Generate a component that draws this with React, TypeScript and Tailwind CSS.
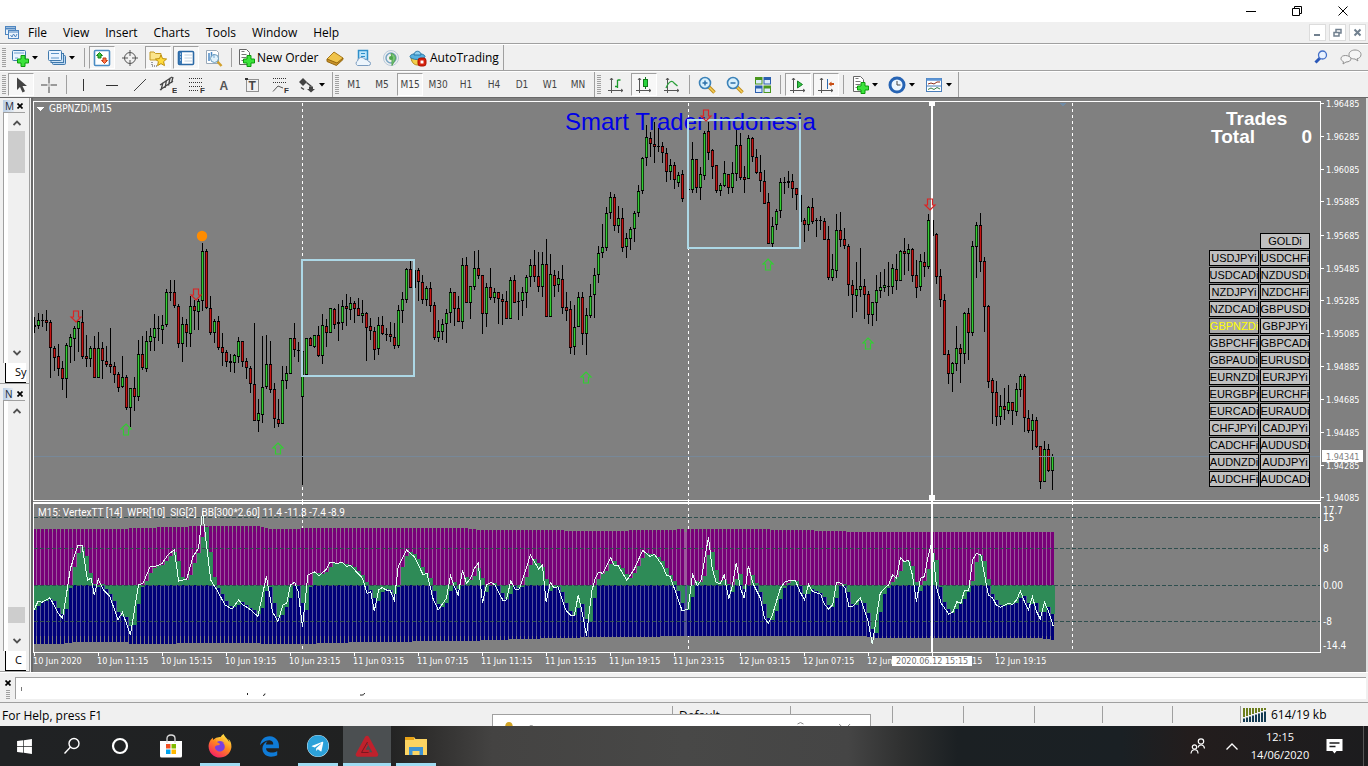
import React from "react";
import { FaEdgeLegacy, FaFirefoxBrowser, FaTelegram, FaWindows } from "react-icons/fa";

type Kids = { children?: React.ReactNode };

/* ---------- price data: high, low, body top, body bottom, direction ---------- */
type Candle = [number, number, number, number, "g" | "r" | "k"];

const CANDLES: Candle[] = [
  [317, 333, 325, 327, "g"], [313, 329, 320, 326, "g"], [314, 327, 320, 321, "r"], [310, 331, 320, 323, "r"],
  [320, 378, 322, 348, "r"], [346, 371, 348, 358, "r"], [344, 376, 356, 369, "r"], [361, 390, 368, 379, "r"],
  [343, 398, 345, 379, "g"], [334, 363, 337, 347, "g"], [326, 361, 328, 339, "g"], [321, 352, 321, 329, "g"],
  [310, 359, 322, 357, "r"], [335, 367, 356, 359, "r"], [346, 367, 348, 359, "g"], [336, 378, 348, 378, "r"],
  [332, 378, 348, 378, "g"], [342, 379, 348, 361, "r"], [346, 367, 361, 365, "r"], [328, 373, 364, 367, "r"],
  [362, 383, 366, 375, "r"], [372, 392, 374, 388, "r"], [356, 388, 377, 387, "g"], [375, 410, 377, 408, "r"],
  [388, 427, 388, 408, "g"], [377, 411, 388, 397, "r"], [340, 401, 354, 397, "g"], [336, 370, 354, 368, "r"],
  [331, 372, 341, 369, "g"], [328, 351, 336, 342, "g"], [314, 351, 328, 338, "g"], [316, 341, 328, 329, "r"],
  [315, 344, 325, 330, "g"], [289, 327, 292, 325, "g"], [280, 301, 292, 293, "r"], [280, 308, 292, 306, "r"],
  [304, 348, 306, 344, "r"], [317, 362, 324, 344, "g"], [319, 347, 324, 333, "r"], [296, 347, 306, 334, "g"],
  [300, 330, 306, 311, "r"], [299, 330, 301, 312, "g"], [243, 311, 251, 301, "g"], [249, 309, 251, 308, "r"],
  [296, 335, 308, 333, "r"], [319, 343, 321, 333, "g"], [316, 350, 321, 348, "r"], [333, 366, 347, 353, "r"],
  [350, 367, 352, 362, "r"], [354, 372, 361, 363, "r"], [354, 373, 355, 363, "g"], [337, 363, 341, 357, "g"],
  [341, 367, 341, 362, "r"], [358, 379, 361, 368, "r"], [366, 393, 368, 384, "r"], [323, 421, 384, 421, "r"],
  [399, 432, 413, 421, "g"], [336, 423, 387, 415, "g"], [335, 389, 364, 387, "g"], [341, 393, 364, 390, "r"],
  [383, 428, 389, 419, "r"], [399, 427, 419, 424, "r"], [366, 424, 380, 424, "g"], [366, 389, 373, 381, "g"],
  [338, 374, 338, 374, "g"], [323, 357, 338, 350, "r"], [342, 362, 350, 351, "r"], [342, 485, 351, 397, "g"],
  [338, 376, 338, 375, "g"], [337, 346, 338, 346, "r"], [335, 348, 335, 347, "g"], [326, 357, 335, 356, "r"],
  [314, 364, 325, 356, "g"], [319, 347, 326, 333, "r"], [308, 333, 308, 333, "g"], [308, 329, 309, 325, "r"],
  [304, 341, 322, 324, "r"], [300, 330, 306, 323, "g"], [294, 326, 306, 309, "r"], [297, 320, 303, 310, "g"],
  [301, 323, 303, 309, "r"], [298, 316, 308, 316, "r"], [300, 323, 313, 316, "g"], [312, 361, 313, 328, "r"],
  [318, 340, 326, 331, "r"], [327, 360, 331, 350, "r"], [317, 355, 325, 349, "g"], [316, 335, 325, 334, "r"],
  [328, 341, 334, 335, "r"], [322, 342, 334, 337, "r"], [323, 349, 337, 346, "r"], [305, 348, 310, 346, "g"],
  [292, 323, 299, 311, "g"], [268, 303, 269, 300, "g"], [261, 288, 269, 288, "r"], [269, 288, 270, 288, "k"],
  [268, 301, 270, 282, "r"], [275, 304, 282, 300, "r"], [286, 306, 288, 300, "g"], [282, 312, 288, 306, "r"],
  [302, 340, 305, 338, "r"], [320, 342, 331, 338, "g"], [319, 340, 324, 332, "g"], [309, 343, 313, 324, "g"],
  [288, 323, 292, 313, "g"], [292, 326, 292, 309, "r"], [296, 322, 308, 322, "r"], [258, 329, 265, 322, "g"],
  [257, 303, 265, 303, "r"], [286, 319, 286, 303, "g"], [251, 290, 268, 287, "g"], [250, 279, 268, 276, "r"],
  [275, 334, 275, 314, "r"], [283, 327, 287, 314, "g"], [268, 300, 287, 298, "r"], [288, 303, 292, 298, "g"],
  [292, 324, 292, 299, "r"], [294, 325, 299, 302, "r"], [291, 319, 301, 319, "r"], [277, 319, 280, 319, "g"],
  [275, 303, 280, 303, "r"], [292, 320, 301, 302, "r"], [287, 316, 292, 301, "g"], [275, 308, 277, 293, "g"],
  [259, 287, 265, 277, "g"], [250, 282, 265, 277, "r"], [252, 292, 276, 287, "r"], [252, 297, 264, 287, "g"],
  [239, 317, 264, 317, "r"], [254, 317, 274, 317, "g"], [270, 297, 275, 286, "r"], [271, 292, 278, 285, "g"],
  [265, 314, 279, 308, "r"], [292, 321, 307, 311, "r"], [301, 354, 309, 348, "r"], [305, 355, 327, 347, "g"],
  [292, 327, 297, 327, "g"], [292, 345, 297, 334, "r"], [308, 355, 315, 334, "g"], [284, 318, 296, 316, "g"],
  [268, 318, 275, 295, "g"], [246, 283, 253, 275, "g"], [224, 258, 247, 253, "g"], [207, 251, 213, 248, "g"],
  [192, 219, 197, 213, "g"], [194, 231, 197, 226, "r"], [206, 233, 218, 226, "g"], [208, 252, 218, 248, "r"],
  [233, 258, 238, 247, "g"], [227, 250, 229, 239, "g"], [211, 242, 213, 229, "g"], [185, 217, 191, 213, "g"],
  [157, 194, 158, 191, "g"], [125, 166, 137, 158, "g"], [132, 157, 138, 144, "r"], [122, 163, 144, 147, "r"],
  [128, 152, 146, 147, "r"], [142, 163, 146, 153, "r"], [148, 182, 153, 172, "r"], [159, 180, 165, 172, "g"],
  [162, 189, 165, 180, "r"], [172, 187, 175, 183, "g"], [170, 202, 174, 199, "r"], [189, 213, 189, 190, "k"],
  [142, 193, 159, 190, "g"], [159, 193, 159, 188, "r"], [167, 200, 174, 188, "g"], [131, 180, 133, 176, "g"],
  [122, 160, 131, 153, "r"], [149, 179, 150, 167, "r"], [165, 193, 165, 191, "r"], [183, 196, 185, 191, "g"],
  [161, 187, 173, 186, "g"], [174, 194, 174, 188, "r"], [162, 193, 173, 188, "g"], [130, 181, 145, 174, "g"],
  [133, 180, 145, 178, "r"], [166, 193, 177, 180, "r"], [135, 179, 138, 179, "g"], [137, 162, 138, 157, "r"],
  [149, 174, 157, 173, "r"], [155, 192, 172, 181, "r"], [170, 204, 181, 204, "r"], [193, 244, 202, 244, "r"],
  [217, 247, 226, 244, "g"], [209, 230, 211, 225, "g"], [178, 218, 182, 211, "g"], [177, 194, 182, 183, "r"],
  [171, 188, 181, 183, "r"], [174, 198, 181, 189, "r"], [188, 210, 188, 195, "r"], [194, 222, 195, 222, "k"],
  [218, 242, 220, 225, "r"], [206, 231, 207, 225, "g"], [198, 224, 207, 222, "r"], [218, 237, 220, 221, "r"],
  [216, 230, 220, 221, "r"], [218, 240, 221, 240, "r"], [226, 280, 239, 278, "r"], [254, 281, 269, 278, "g"],
  [214, 278, 230, 271, "g"], [212, 247, 230, 240, "r"], [228, 249, 239, 246, "r"], [244, 296, 246, 285, "r"],
  [280, 318, 285, 295, "r"], [262, 312, 289, 296, "g"], [248, 297, 286, 290, "g"], [279, 319, 286, 295, "r"],
  [291, 324, 294, 315, "r"], [302, 326, 302, 315, "g"], [275, 321, 290, 303, "g"], [272, 298, 287, 291, "g"],
  [269, 292, 285, 288, "g"], [262, 296, 286, 287, "r"], [264, 294, 268, 287, "g"], [254, 290, 269, 281, "r"],
  [250, 281, 251, 281, "g"], [238, 275, 251, 254, "r"], [244, 271, 249, 254, "g"], [248, 282, 249, 276, "r"],
  [260, 298, 275, 288, "r"], [254, 291, 261, 287, "g"], [252, 277, 262, 267, "r"], [214, 269, 220, 267, "g"],
  [220, 236, 220, 236, "k"], [233, 284, 234, 277, "r"], [269, 307, 276, 300, "r"], [294, 355, 300, 355, "r"],
  [350, 384, 354, 374, "r"], [362, 392, 363, 374, "g"], [326, 371, 348, 364, "g"], [344, 383, 348, 354, "r"],
  [312, 364, 313, 354, "g"], [308, 360, 313, 333, "r"], [241, 336, 246, 333, "g"], [222, 278, 225, 247, "g"],
  [213, 272, 225, 262, "r"], [257, 332, 261, 307, "r"], [305, 388, 306, 382, "r"], [378, 424, 380, 393, "r"],
  [381, 426, 392, 417, "r"], [395, 425, 406, 417, "g"], [388, 420, 406, 410, "r"], [385, 414, 402, 411, "g"],
  [402, 425, 402, 411, "r"], [383, 416, 389, 412, "g"], [374, 397, 376, 390, "g"], [374, 432, 376, 418, "r"],
  [410, 433, 418, 431, "r"], [414, 450, 420, 431, "g"], [417, 448, 420, 447, "r"], [446, 489, 446, 482, "r"],
  [441, 482, 449, 482, "g"], [444, 472, 449, 471, "r"], [454, 490, 456, 471, "g"],
];

const barX = (i: number) => 34 + 4 * i + (i > 162 ? 2 : 0);
const FILL = { g: "#32cd32", r: "#c81414", k: "#000000" };

/* ---------- oscillator data ---------- */
const OSC_A: number[][] = [
  [95, 345], [107, 318], [118, 322], [140, 308], [163, 355], [175, 370], [190, 270], [197, 220], [218, 152], [230, 152],
  [245, 255], [255, 250], [264, 300], [275, 252], [290, 285], [308, 305], [330, 374], [343, 352], [365, 420], [388, 268],
  [400, 266], [420, 216], [438, 213], [453, 206], [470, 180], [488, 164], [500, 258], [523, 252], [540, 185], [556, 160],
  [567, 48], [590, 255], [610, 290], [630, 330], [650, 342], [668, 315], [680, 330], [697, 340], [722, 364], [746, 244],
  [763, 350], [778, 380], [792, 330], [803, 325], [813, 270], [825, 262], [835, 290], [847, 395], [862, 240], [880, 230],
  [893, 242], [912, 225], [924, 202], [945, 205], [958, 202], [972, 215], [980, 210], [1002, 235], [1015, 250], [1028, 295],
  [1038, 290], [1048, 348], [1060, 285], [1070, 278], [1082, 285], [1092, 285], [1104, 316], [1115, 215], [1138, 165],
  [1160, 185], [1184, 238], [1196, 236], [1212, 310], [1227, 345], [1250, 310], [1261, 242], [1272, 275], [1283, 300],
  [1295, 225], [1306, 265], [1318, 250], [1328, 220], [1339, 205], [1351, 324], [1362, 270], [1375, 262], [1386, 270],
  [1408, 316], [1418, 315], [1430, 258], [1442, 282], [1453, 284], [1466, 245], [1485, 180], [1508, 222],
];
const OSC_B: number[][] = [
  [7, 210], [18, 322], [30, 262], [40, 278], [52, 275], [75, 345], [90, 362], [100, 362], [111, 300], [122, 350],
  [135, 422], [150, 290], [160, 250], [170, 232], [182, 235], [205, 188], [216, 212], [227, 212], [252, 256], [275, 220],
  [298, 166], [320, 185], [332, 178], [355, 210], [367, 240], [378, 245], [390, 280], [413, 348], [430, 342], [443, 238],
  [457, 272], [468, 255], [489, 127], [500, 220], [512, 263], [524, 265], [535, 240], [548, 312], [559, 270], [570, 203],
  [582, 280], [593, 310], [605, 212], [617, 262], [640, 310], [652, 370], [663, 385], [675, 360], [698, 280], [710, 262],
  [725, 256], [742, 258], [755, 290], [768, 315], [780, 268], [792, 290], [815, 298], [826, 328], [838, 342], [850, 330],
  [861, 262], [875, 265], [886, 280], [897, 335], [908, 335], [930, 308], [942, 345], [953, 380], [965, 448], [988, 295],
  [1000, 280], [1012, 270], [1024, 240], [1035, 250], [1047, 188], [1058, 200], [1070, 196], [1082, 242], [1093, 320],
  [1105, 250], [1116, 245], [1128, 180], [1138, 140], [1152, 280], [1165, 325], [1187, 357], [1200, 350], [1210, 320],
  [1222, 325], [1233, 285], [1245, 285], [1256, 195], [1268, 175], [1280, 180], [1302, 300], [1315, 310], [1325, 330],
  [1338, 337], [1360, 325], [1372, 328], [1384, 315], [1395, 288], [1407, 320], [1418, 345], [1430, 305], [1442, 350],
  [1453, 372], [1465, 322], [1477, 350], [1490, 392],
];
const OSC: number[][] = [
  ...OSC_A.map(([x, y]) => [x / 2.8, 495 + y / 3]),
  ...OSC_B.map(([x, y]) => [540 + x / 2.904, 495 + y / 3]),
];
const UPPER: number[][] = [[34, 529], [110, 529], [170, 527], [207, 526], [258, 526], [270, 529], [330, 528], [465, 528], [480, 530], [530, 530], [600, 531], [700, 529], [735, 529], [800, 530], [860, 532], [1056, 532]];
const LOWER: number[][] = [[34, 644], [60, 644], [75, 642], [125, 642], [130, 644], [220, 643], [300, 644], [360, 642], [465, 641], [520, 639], [600, 637], [720, 636], [860, 636], [880, 638], [1035, 638], [1056, 640]];

function at(points: number[][], x: number) {
  if (x <= points[0][0]) return points[0][1];
  for (let i = 1; i < points.length; i++) {
    const [x1, y1] = points[i];
    if (x <= x1) {
      const [x0, y0] = points[i - 1];
      return y0 + ((y1 - y0) * (x - x0)) / (x1 - x0);
    }
  }
  return points[points.length - 1][1];
}

const ZERO = 585;
const AXIS = "'DejaVu Sans Condensed', 'Noto Sans', sans-serif";

const PRICES: [string, number][] = [
  ["1.96485", 103], ["1.96285", 136], ["1.96085", 169], ["1.95885", 201], ["1.95685", 235], ["1.95485", 268],
  ["1.95285", 300], ["1.95085", 333], ["1.94885", 366], ["1.94685", 399], ["1.94485", 432], ["1.94285", 465], ["1.94085", 497],
];
const TIMES: [string, number][] = [
  ["10 Jun 2020", 34], ["10 Jun 11:15", 98], ["10 Jun 15:15", 162], ["10 Jun 19:15", 226], ["10 Jun 23:15", 290],
  ["11 Jun 03:15", 354], ["11 Jun 07:15", 418], ["11 Jun 11:15", 482], ["11 Jun 15:15", 546], ["11 Jun 19:15", 610],
  ["11 Jun 23:15", 674], ["12 Jun 03:15", 740], ["12 Jun 07:15", 804], ["12 Jun 11:15", 868], ["12 Jun 15:15", 932], ["12 Jun 19:15", 996],
];

function SignalArrow({ x, y, up }: { x: number; y: number; up?: boolean }) {
  return (
    <path
      d={up ? "M0 -6 L5 -1 H2.5 V5 H-2.5 V-1 H-5 Z" : "M0 6 L5 1 H2.5 V-5 H-2.5 V1 H-5 Z"}
      transform={`translate(${x} ${y})`}
      fill="none"
      stroke={up ? "#32cd32" : "#dc2323"}
      strokeWidth="1.2"
    />
  );
}

function PriceChart() {
  return (
    <svg className="block h-[404px] w-full" aria-label="GBPNZDi M15 price chart">
      <g transform="translate(-33 -98)" shapeRendering="crispEdges">
        {[302, 688, 1072].map((x) => (
          <line key={x} x1={x + 0.5} x2={x + 0.5} y1="103" y2="502" stroke="#fff" strokeDasharray="3 3" />
        ))}
        <text x="565" y="130" fontFamily="'Liberation Sans', Arial, sans-serif" fontSize="24" fill="#0000e6">Smart Trader Indonesia</text>
        {CANDLES.map(([h, l, t, b, c], i) => {
          const x = barX(i);
          return (
            <g key={i}>
              <rect x={x} y={h} width="1" height={l - h} fill="#000" />
              {c === "k" ? (
                <rect x={x} y={t} width="2" height={b - t} fill="#000" />
              ) : (
                <>
                  <rect x={x - 1} y={t} width="3" height={Math.max(1, b - t)} fill="#000" />
                  {b - t > 2 && <rect x={x} y={t + 1} width="1" height={b - t - 2} fill={FILL[c]} />}
                  {b - t > 2 && <rect x={x - 1} y={t + 1} width="3" height={b - t - 2} fill={FILL[c]} fillOpacity="0.3" />}
                </>
              )}
            </g>
          );
        })}
        <rect x="302" y="260" width="112" height="116" fill="none" stroke="#add8e6" strokeWidth="2" />
        <rect x="688" y="120" width="112" height="128" fill="none" stroke="#add8e6" strokeWidth="2" />
        <rect x="34" y="456" width="1286" height="1" fill="#778899" />
        <rect x="931" y="102" width="2" height="400" fill="#fff" />
        <rect x="929" y="101" width="6" height="5" fill="#fff" />
        <rect x="929" y="495" width="6" height="5" fill="#fff" />
        <path d="M1059 103 h8 l-4 3 z" fill="#708ba5" />
        <path d="M37 107 h7 l-3.500 4 z" fill="#fff" />
        <path d="M33.500 500.500 V101.500 H1320.500 V500.500 Z" fill="none" stroke="#fff" />
        {PRICES.map(([p, y]) => (
          <g key={p}>
            <rect x="1321" y={y} width="3" height="1" fill="#fff" />
            <text x="1326" y={y + 4} fontFamily={AXIS} fontSize="9" fill="#fff">{p}</text>
          </g>
        ))}
        <rect x="1322" y="450" width="41" height="12" fill="#fff" />
        <text x="1326" y="460" fontFamily={AXIS} fontSize="9" fill="#808080">1.94341</text>
        <text x="49" y="112" fontFamily={AXIS} fontSize="10" fill="#fff">GBPNZDi,M15</text>
      </g>
      <g transform="translate(-33 -98)">
        {[[76, 316], [196, 294], [706, 115], [930, 204]].map(([x, y]) => <SignalArrow key={x} x={x} y={y} />)}
        {[[126, 430], [278, 449], [586, 378], [768, 265], [868, 344]].map(([x, y]) => <SignalArrow key={x} x={x} y={y} up />)}
        <circle cx="202" cy="236" r="5.200" fill="#ff8c00" />
      </g>
    </svg>
  );
}

function Oscillator() {
  return (
    <svg className="block h-[170px] w-full" aria-label="VertexTT oscillator">
      <g transform="translate(-33 -502)" shapeRendering="crispEdges">
        {[302, 688, 1072].map((x) => (
          <line key={x} x1={x + 0.5} x2={x + 0.5} y1="502" y2="650" stroke="#fff" strokeDasharray="3 3" />
        ))}
        <rect x="34" y="532" width="1020" height="53" fill="#9c589c" />
        <rect x="34" y="585" width="1020" height="51" fill="#55559a" />
        {CANDLES.map((_, i) => {
          const x = barX(i) - 1;
          const top = Math.round(at(UPPER, x));
          const bottom = Math.round(at(LOWER, x));
          const v = Math.round((at(OSC, x + 1) + at(OSC, x - 2) + at(OSC, x - 4)) / 3);
          return (
            <g key={i}>
              <rect x={x} y={top} width="3" height={ZERO - top} fill="#780078" />
              <rect x={x} y={ZERO} width="3" height={bottom - ZERO} fill="#000078" />
              <rect x={x} y={Math.min(v, ZERO)} width="4" height={Math.abs(v - ZERO)} fill="#2e8b57" />
            </g>
          );
        })}
        {[517, 548, 585, 621].map((y) => (
          <line key={y} x1="34" x2="1320" y1={y + 0.5} y2={y + 0.5} stroke="#2f4f4f" strokeDasharray="4 2" />
        ))}
        <polyline points={OSC.map(([x, y]) => `${x.toFixed(1)},${y.toFixed(1)}`).join(" ")} fill="none" stroke="#e6fff5" />
        <rect x="931" y="502" width="2" height="151" fill="#fff" />
        <path d="M33.500 652.500 V503.500 H1320.500 V652.500 Z" fill="none" stroke="#fff" />
        <rect x="33" y="502" width="1288" height="1" fill="#fff" />
        {TIMES.map(([t, x]) => (
          <g key={t}>
            <rect x={x} y="653" width="1" height="3" fill="#fff" />
            <text x={x - 1} y="664" fontFamily={AXIS} fontSize="9" fill="#fff">{t}</text>
          </g>
        ))}
        <rect x="892" y="656" width="80" height="10" fill="#fff" />
        <text x="896" y="664" fontFamily={AXIS} fontSize="9" fill="#707070">2020.06.12 15:15</text>
        {([["17.7", 514], ["15", 521], ["8", 552], ["0.00", 589], ["-8", 625], ["-14.4", 649]] as [string, number][]).map(([t, y]) => (
          <text key={t} x="1323" y={y} fontFamily={AXIS} fontSize="10" fill="#fff">{t}</text>
        ))}
        <text x="38" y="516" fontFamily="Roboto, 'Noto Sans', sans-serif" fontSize="10" fill="#fff" xmlSpace="preserve">M15: VertexTT [14]  WPR[10]  SIG[2]  BB[300*2.60] 11.4 -11.8 -7.4 -8.9</text>
      </g>
    </svg>
  );
}

/* ---------- symbol switcher ---------- */
const SYMBOLS = [
  "", "GOLDi", "USDJPYi", "USDCHFi", "USDCADi", "NZDUSDi", "NZDJPYi", "NZDCHFi", "NZDCADi", "GBPUSDi", "GBPNZDi", "GBPJPYi",
  "GBPCHFi", "GBPCADi", "GBPAUDi", "EURUSDi", "EURNZDi", "EURJPYi", "EURGBPi", "EURCHFi", "EURCADi", "EURAUDi",
  "CHFJPYi", "CADJPYi", "CADCHFi", "AUDUSDi", "AUDNZDi", "AUDJPYi", "AUDCHFi", "AUDCADi",
];

function SymbolGrid() {
  return (
    <div className="absolute top-[135px] right-[56px] grid grid-cols-2 gap-x-px gap-y-px">
      {SYMBOLS.map((s) =>
        s === "" ? (
          <span key="blank" />
        ) : (
          <button
            key={s}
            className={`flex h-4 w-[50px] items-center justify-center border border-black font-['Liberation_Sans',sans-serif] text-[11px] leading-[14px] ${
              s === "GBPNZDi" ? "bg-[#a9a9a9] text-[#ffff00]" : "bg-[#c0c0c0] text-black"
            }`}
          >
            {s}
          </button>
        )
      )}
    </div>
  );
}

/* ---------- tool bar parts ---------- */
const Ic = ({ children }: Kids) => (
  <svg width="18" height="18" viewBox="0 0 18 18" fill="none" stroke="#555" aria-hidden="true">{children}</svg>
);
const Caret = () => <svg className="mt-px" width="6" height="4" viewBox="0 0 6 4" aria-hidden="true"><path d="M0 0h6L3 3.500z" fill="#000" /></svg>;
const Grip = () => (
  <span className="flex w-[7px] shrink-0 items-center justify-center">
    <svg width="4" height="19" viewBox="0 0 4 19" aria-hidden="true">
      <path d="M2 0V19" stroke="#a0a0a0" strokeWidth="4" strokeDasharray="1 1" />
    </svg>
  </span>
);
const Sep = () => <span className="mx-[3px] my-[3px] w-px shrink-0 bg-[#a0a0a0]" />;

function Tool({ label, on, text, children }: Kids & { label: string; on?: boolean; text?: string }) {
  return (
    <button aria-label={label} aria-pressed={on} className="flex w-7 shrink-0 items-center justify-center">
      <span
        className={`flex h-[23px] w-[26px] items-center justify-center border font-['DejaVu_Sans_Condensed','Noto_Sans',sans-serif] text-[10px] text-[#444] ${
          on ? "border-t-[#a0a0a0] border-r-white border-b-white border-l-[#a0a0a0] bg-[#f7f7f7]" : "border-transparent"
        }`}
      >
        {text ?? children}
      </span>
    </button>
  );
}
function DropTool({ label, children }: Kids & { label: string }) {
  return (
    <button aria-label={label} className="flex w-[37px] shrink-0 items-center gap-[3px] pl-1">
      {children}
      <Caret />
    </button>
  );
}

const Plus = () => <path d="M10 6.500h4V10h3.500v4H14v3.500h-4V14H6.500v-4H10z" fill="#3be33b" stroke="#0c9a0c" />;
const PageLines = () => (
  <>
    <path d="M2.500 .5h7l3 3v12h-10z" fill="#fff" stroke="#666" />
    <path d="M4.500 5.500h5M4.500 8.500h5M4.500 11.500h3M4.500 2.500h3" stroke="#777" />
  </>
);
const Axes = () => <path d="M4.500 2V17M1 14.500H16M3 4l1.500-2L6 4M14 13l2 1.500-2 1.500" stroke="#555" />;
const Lens = () => (
  <>
    <path d="M11 11l5.500 5.500" stroke="#c08c18" strokeWidth="3.500" />
    <path d="M11 11l5.500 5.500" stroke="#f5cf5a" strokeWidth="1.500" />
    <circle cx="7" cy="7" r="5.500" fill="#d8f0fc" stroke="#3c82b8" strokeWidth="1.600" />
  </>
);

function ToolbarMain() {
  return (
    <div className="flex h-[25px] w-[504px] items-stretch border-r border-[#a0a0a0]">
      <Grip />
      <DropTool label="New chart">
        <Ic><rect x="1.500" y="1.500" width="13" height="10" rx="1" fill="#eaf4ff" stroke="#3f79ad" /><path d="M3 4h10M4 9h3" stroke="#6ea0ce" /><Plus /></Ic>
      </DropTool>
      <DropTool label="Profiles">
        <Ic><rect x="4.500" y="6.500" width="13" height="9" rx="1" fill="#bcd8f2" stroke="#3f79ad" /><rect x="3" y="4.500" width="12.500" height="9" fill="#cfe4f7" stroke="#3f79ad" /><rect x=".5" y="1.500" width="13" height="10" rx="1" fill="#eaf4ff" stroke="#3f79ad" /><path d="M3 4.500h8M3 9h8" stroke="#5b93c8" /></Ic>
      </DropTool>
      <Sep />
      <Tool label="Market Watch" on>
        <Ic><rect x="1.500" y="1.500" width="15" height="15" rx="1" fill="#fff" stroke="#4a8cc4" strokeWidth="1.600" /><path d="M6.500 3.500l3 3H8v2.500H5V6.500H3.500z" fill="#3fc53f" stroke="#168116" /><path d="M11.500 14.500l-3-3H10V9h3v2.500h1.500z" fill="#ff7348" stroke="#c33d12" /></Ic>
      </Tool>
      <Tool label="Data Window"><Ic><circle cx="9" cy="9" r="5.500" /><path d="M9 1v6M9 11v6M1 9h6M11 9h6" /></Ic></Tool>
      <Tool label="Navigator" on>
        <Ic><path d="M1 3h4l1.500 1.500H12V11H1z" fill="#fbe58c" stroke="#c39a24" /><path d="M3 13v4h5" stroke="#444" strokeDasharray="1 1" /><path d="M12 6l1.600 3.600 4 .4-3 2.600.9 4L12 14.600 8.600 16.600l.8-4-3-2.600 4-.4z" fill="#ffdb3b" stroke="#bd8d0a" /></Ic>
      </Tool>
      <Tool label="Terminal" on>
        <Ic><rect x="1.500" y="2.500" width="15" height="13" rx="1" fill="#fff" stroke="#2c6aa6" strokeWidth="1.600" /><path d="M2 3h3v12H2z" fill="#3a78b5" stroke="none" /><path d="M7.500 6h8M7.500 9h8M7.500 12h8" stroke="#c3d2e0" /><path d="M3 5h1M3 8h1M3 11h1" stroke="#fff" /></Ic>
      </Tool>
      <Tool label="Strategy Tester">
        <Ic><path d="M1.500 1.500h10l2 2v11h-12z" fill="#fff" stroke="#9aa9b8" /><path d="M4 4v8M6.500 3v5M9 5v4" stroke="#4a88c5" strokeWidth="1.500" /><path d="M12 12l4.500 5" stroke="#d2a02c" strokeWidth="2.500" /><circle cx="9.500" cy="9.500" r="4" fill="#cfeaf8" fillOpacity=".6" stroke="#6b9cbd" /></Ic>
      </Tool>
      <Sep />
      <button className="flex w-[86px] shrink-0 items-center gap-[2px] pl-[2px] text-xs whitespace-nowrap">
        <Ic><PageLines /><Plus /></Ic>New Order
      </button>
      <Tool label="MetaEditor"><Ic><path d="M1 10L8 3l9 6-6 6.500z" fill="#f0c44c" stroke="#a8791a" /><path d="M1 10v2.500l9.500 4 6.500-6V9l-6 5z" fill="#c9922a" stroke="#96690f" /></Ic></Tool>
      <Tool label="VPS"><Ic><path d="M4.500 1.500h9v9h-9z" fill="#bfe6fb" stroke="#2e8fca" strokeWidth="1.500" /><path d="M7 4.500h4M7 7.500h4" stroke="#2e8fca" /><path d="M3.500 16.500a2.500 2.500 0 010-4.500A4 4 0 0111 10.500a3 3 0 013.500 2 2 2 0 010 4z" fill="#edf5fc" stroke="#7b9cc0" /></Ic></Tool>
      <Tool label="Signals"><Ic><circle cx="9" cy="9" r="7.500" stroke="#b7c9da" /><circle cx="9" cy="9" r="5" stroke="#78a5c4" strokeWidth="1.500" /><path d="M9 4.500a4.500 4.500 0 014 6.500l-3 5.500V9z" fill="#78c878" stroke="#55a555" /><circle cx="9" cy="9" r="2" fill="#4ca64c" stroke="none" /></Ic></Tool>
      <button className="flex items-center gap-[3px] pl-1 text-xs">
        <Ic><path d="M2 9c1 5 3 7 7 7s6-3 6-7z" fill="#f3cf4a" stroke="#ad8617" /><ellipse cx="8.500" cy="7.500" rx="7.500" ry="3" fill="#55b1e0" stroke="#2878a8" /><path d="M5 6c0-5 7-5 7 0z" fill="#8fd0f0" stroke="#2878a8" /><rect x="9" y="9" width="8" height="8" rx="2.500" fill="#d8200c" stroke="#a81200" /><rect x="11.500" y="11.500" width="3" height="3" fill="#fff" stroke="none" /></Ic>
        AutoTrading
      </button>
    </div>
  );
}

function ToolbarCharts() {
  const frames = ["M1", "M5", "M15", "M30", "H1", "H4", "D1", "W1", "MN"];
  const tag = (t: string) => <text x="13" y="17" fontSize="8" fontFamily="'Liberation Sans', sans-serif" fontWeight="bold" fill="#333" stroke="none">{t}</text>;
  return (
    <div className="flex h-[25px] w-max items-stretch">
      <div className="flex w-[333px] border-r border-[#a0a0a0]">
        <Grip />
        <Tool label="Cursor" on><Ic><path d="M5 1.500V14l3-3 2.500 5.500 2.500-1.200L10.500 10H15z" fill="#444" stroke="none" /></Ic></Tool>
        <Tool label="Crosshair"><Ic><path d="M9 1v6.500M9 10.500V17M1 9h6.500M10.500 9H17M9 8.500v1" stroke="#444" /></Ic></Tool>
        <Sep />
        <Tool label="Vertical line"><Ic><path d="M8.500 3V15" stroke="#333" /></Ic></Tool>
        <Tool label="Horizontal line"><Ic><path d="M3 9.500H15" stroke="#333" /></Ic></Tool>
        <Tool label="Trendline"><Ic><path d="M3 15L15 3" stroke="#444" /></Ic></Tool>
        <Tool label="Equidistant channel"><Ic><path d="M1 9L13 1M1 14L14 5M4 6.500L2 14M7.500 4L6 12M11 2L9.500 9.500M14 1l-1.500 6" stroke="#444" strokeWidth="1.300" />{tag("E")}</Ic></Tool>
        <Tool label="Fibonacci retracement"><Ic><path d="M2 2.500h14M2 6.500h14M2 10.500h14M2 14.500h9" strokeDasharray="1 1" stroke="#333" />{tag("F")}</Ic></Tool>
        <Tool label="Text"><Ic><text x="4.500" y="14" fontSize="12" fontFamily="'Liberation Sans', sans-serif" fontWeight="bold" fill="#555" stroke="none">A</text></Ic></Tool>
        <Tool label="Text label"><Ic><rect x="3.500" y="3.500" width="12" height="12" strokeDasharray="1 1" stroke="#333" /><path d="M2 2h3v2H2z" fill="#333" stroke="none" /><text x="5.500" y="14" fontSize="12" fontFamily="'Liberation Sans', sans-serif" fontWeight="bold" fill="#444" stroke="none">T</text></Ic></Tool>
        <Tool label="Fibonacci expansion"><Ic><path d="M2 2.500h14M2 6.500h14" strokeDasharray="1 1" stroke="#333" /><path d="M2 15.500L7 10l5 2" />{tag("F")}</Ic></Tool>
        <DropTool label="Arrows"><Ic><path d="M5 2l4 4-4 4-4-4z M13 16.500l-4-3.500h2v-2.500h4V13h2z" fill="#444" stroke="none" /><path d="M3 11.500l3 2M8.500 6.500l5 4" stroke="#444" strokeWidth="1.500" /></Ic></DropTool>
      </div>
      <div className="flex w-[262px] border-r border-[#a0a0a0]">
        <Grip />
        {frames.map((f) => <Tool key={f} label={f} text={f} on={f === "M15"} />)}
      </div>
      <div className="flex border-r border-[#a0a0a0]">
        <Grip />
        <Tool label="Bar chart"><Ic><Axes /><path d="M8 10.500h2.500M10.500 4h3M10.500 4v8" stroke="#1c9a2c" strokeWidth="1.300" /></Ic></Tool>
        <Tool label="Candlesticks" on><Ic><Axes /><path d="M10.500 1v12" stroke="#127a1c" /><rect x="8.500" y="3.500" width="4" height="7" fill="#28d43c" stroke="#127a1c" /></Ic></Tool>
        <Tool label="Line chart"><Ic><Axes /><path d="M3 12C6 5 9 4 11 7l3.500 3" stroke="#2ba03b" strokeWidth="1.300" /></Ic></Tool>
        <Sep />
        <Tool label="Zoom in"><Ic><Lens /><path d="M4.500 7h5M7 4.500v5" stroke="#2b6fa8" strokeWidth="1.500" /></Ic></Tool>
        <Tool label="Zoom out"><Ic><Lens /><path d="M4.500 7h5" stroke="#2b6fa8" strokeWidth="1.500" /></Ic></Tool>
        <Tool label="Tile windows"><Ic><g stroke="none"><path d="M1 1h7.500v7.500H1z M9.500 9.500H17V17H9.500z" fill="#49961d" /><path d="M9.500 1H17v7.500H9.500z M1 9.500h7.500V17H1z" fill="#2b5fae" /><path d="M2 4h5.500v3.500H2z M10.500 4H16v3.500h-5.500z M2 12.500h5.500V16H2z M10.500 12.500H16V16h-5.500z" fill="#dbeafc" /></g></Ic></Tool>
        <Sep />
        <Tool label="Auto scroll" on><Ic><Axes /><path d="M8.500 5v7l5-3.500z" fill="#35c545" stroke="#128022" /></Ic></Tool>
        <Tool label="Chart shift" on><Ic><Axes /><path d="M10.500 3v10" stroke="#2d6bb0" /><path d="M11.500 8l3-2.500V7H17v2h-2.500v1.500z" fill="#c94f16" stroke="none" /></Ic></Tool>
        <Sep />
        <DropTool label="Indicators"><Ic><PageLines /><Plus /></Ic></DropTool>
        <DropTool label="Periods"><Ic><circle cx="9" cy="9" r="7" fill="#eef7ff" stroke="#2764b4" strokeWidth="3" /><path d="M9 5v4h3.500" stroke="#444" /></Ic></DropTool>
        <DropTool label="Templates"><Ic><rect x="1.500" y="2.500" width="15" height="13" fill="#fff" stroke="#4a7ebb" /><path d="M1.500 3.500h15" stroke="#5b94d4" strokeWidth="2.500" /><path d="M3 8l3-1 3 1 3-2h3" stroke="#8a2d1a" /><path d="M3 13.500l3-1.500 3 1.500 3-2 3 1.500" stroke="#398049" /><path d="M2 10h14" stroke="#4a7ebb" /></Ic></DropTool>
      </div>
    </div>
  );
}

/* ---------- docked panels ---------- */
const Chevron = ({ down }: { down?: boolean }) => (
  <svg width="8" height="6" viewBox="0 0 8 6" fill="none" stroke="#505050" strokeWidth="1.800" aria-hidden="true">
    <path d={down ? "M.5 1L4 4.500 7.500 1" : "M.5 5L4 1.500 7.500 5"} />
  </svg>
);
const SmallX = () => (
  <svg width="6" height="6" viewBox="0 0 6 6" stroke="#000" strokeWidth="1.700" aria-hidden="true"><path d="M.5 .5l5 5M5.500 .5l-5 5" /></svg>
);

function DockPanel({ title, tab, thumbAtTop, className }: { title: string; tab: string; thumbAtTop?: boolean; className: string }) {
  return (
    <section className={`flex flex-col border-b border-[#a0a0a0] pt-[2px] pl-[3px] ${className}`}>
      <header className="flex h-3 items-center justify-between pr-[6px]">
        <h2 className="bg-gradient-to-r from-[#b9cde4] to-[#e4ebf3] pl-[2px] text-[10px] leading-3 text-[#1b2a3a]">{title}</h2>
        <button aria-label="Close panel"><SmallX /></button>
      </header>
      <div className="mr-1 flex flex-1 border-t border-l border-[#a0a0a0] bg-white pl-1">
        <div className="flex flex-1 flex-col items-center bg-[#f0f0f0] pt-[7px] pb-[7px]">
          <Chevron />
          <div className={`flex w-full flex-1 flex-col py-[5px] ${thumbAtTop ? "justify-start" : "justify-end pb-[15px]"}`}>
            <div className={`w-full bg-[#cdcdcd] ${thumbAtTop ? "h-[42px]" : "h-4"}`} />
          </div>
          <Chevron down />
        </div>
      </div>
      <div className="mr-[3px] ml-[2px] h-5 border-b border-l border-black bg-white pl-[9px] text-[11px] leading-[18px]">{tab}</div>
    </section>
  );
}

const MdiIcon = ({ children, label }: Kids & { label: string }) => (
  <button aria-label={label} className="flex h-[17px] w-[17px] items-center justify-center border border-[#dcdcdc] bg-white">
    <svg width="9" height="9" viewBox="0 0 9 9" fill="none" stroke="#71808f" strokeWidth="1.500">{children}</svg>
  </button>
);

function Task({ label, children, className = "" }: Kids & { label: string; className?: string }) {
  return <button aria-label={label} className={`flex items-center justify-center border-b-[3px] pt-[3px] ${className || "w-12 border-transparent"}`}>{children}</button>;
}

const StatusCell = ({ className, children }: Kids & { className: string }) => (
  <div className={`my-[3px] border-l border-[#a0a0a0] pl-1.5 leading-5 ${className}`}>{children}</div>
);

export default function App() {
  return (
    <div className="flex min-h-screen flex-col overflow-hidden bg-[#f0f0f0] font-['Open_Sans','Noto_Sans',sans-serif] text-xs text-black">
      {/* window caption */}
      <div className="flex h-[22px] items-center justify-end bg-white pr-5">
        <div className="flex gap-9">
          {[
            ["Minimize", "M0 5.500H10"],
            ["Restore", "M.5 2.500h7v7h-7zM2.500 2.500V.5h7v7h-2"],
            ["Close", "M.5 .5l9 9M9.500 .5l-9 9"],
          ].map(([n, d]) => (
            <button key={n} aria-label={n}><svg width="10" height="10" viewBox="0 0 10 10" fill="none" stroke="#000"><path d={d} /></svg></button>
          ))}
        </div>
      </div>
      {/* menu */}
      <div className="flex h-[22px] items-center border-b border-[#a0a0a0] pr-[2px] pl-1">
        <svg width="16" height="16" viewBox="0 0 16 16" fill="#eaf3fc" stroke="#4f86c0" aria-hidden="true">
          <rect x="1.500" y="1.500" width="10" height="8" /><path d="M2 3.500h9" strokeWidth="2" /><rect x="4.500" y="5.500" width="10" height="8" /><path d="M5 7h9" /><path d="M6.500 10l1.500 2 1.500-3 2 3 1.500-3" fill="none" />
        </svg>
        <nav className="ml-2 flex flex-1 gap-4">
          {["File", "View", "Insert", "Charts", "Tools", "Window", "Help"].map((m) => <button key={m}>{m}</button>)}
        </nav>
        <div className="flex gap-[3px]">
          <MdiIcon label="Minimize chart"><path d="M1 7H7" strokeWidth="2" /></MdiIcon>
          <MdiIcon label="Restore chart"><path d="M1 4.500h5V8H1zM3 4V1.500h5V5H6.500" /></MdiIcon>
          <MdiIcon label="Close chart"><path d="M1.500 1.500l6 6M7.500 1.500l-6 6" strokeWidth="2" /></MdiIcon>
        </div>
      </div>
      {/* tool bars */}
      <div className="flex border-t border-white">
        <div className="flex-1">
          <div className="border-b border-[#a0a0a0]"><ToolbarMain /></div>
          <div className="border-t border-white"><ToolbarCharts /></div>
        </div>
        <div className="absolute right-[6px] mt-1 flex gap-3">
          <button aria-label="Search"><svg width="14" height="14" viewBox="0 0 14 14" fill="none"><path d="M6 8L1.500 12.500" stroke="#2b58b8" strokeWidth="3" /><circle cx="8.500" cy="5" r="4" fill="#e9f2ff" stroke="#4470c8" strokeWidth="1.300" /></svg></button>
          <button aria-label="Chat"><svg width="22" height="16" viewBox="0 0 22 16" fill="#f5f5f5" stroke="#8f8f8f"><path d="M9 5.500C9 3 11.500 1 15 1s6 2 6 4.500-2 4-4 4.300L18 12l-3-2c-3.500 0-6-1.500-6-4.500z" /><path d="M1 9.500C1 7.500 3 6.500 5.500 6.500S11 8 11 9.800 9 13 6 13l-3 2 .5-2.300C2 12 1 11 1 9.500z" /></svg></button>
        </div>
      </div>

      {/* workspace */}
      <main className="flex border-t border-[#696969]">
        <aside className="flex w-[29px] shrink-0 flex-col">
          <DockPanel title="M" tab="Sy" thumbAtTop className="h-[286px]" />
          <DockPanel title="N" tab="C" className="mt-[2px] h-[286px]" />
        </aside>
        <div className="w-1 shrink-0 border-r-2 border-l border-r-[#696969] border-l-[#a0a0a0]" />
        <div className="relative min-w-0 flex-1 overflow-hidden border-r-2 border-[#e0e0e0] bg-[#808080]">
          <PriceChart />
          <Oscillator />
          <div className="absolute top-3 right-[54px] w-[101px] font-['Liberation_Sans',sans-serif] text-[19px] leading-[18px] font-bold text-white">
            <div className="pl-[15px]">Trades</div>
            <div className="flex justify-between"><span>Total</span><span>0</span></div>
          </div>
          <SymbolGrid />
        </div>
      </main>

      {/* terminal strip */}
      <div className="flex h-[30px] border-t border-white pt-1 pb-[3px]">
        <div className="flex w-[15px] flex-col items-center gap-1 pt-[3px]">
          <button aria-label="Close terminal"><SmallX /></button>
          <svg width="4" height="9" viewBox="0 0 4 9"><path d="M2 0V9" stroke="#a0a0a0" strokeWidth="4" strokeDasharray="1 1" /></svg>
        </div>
        <div className="mr-[2px] flex-1 border-t border-l border-[#a0a0a0] bg-white">
          <svg className="block" width="360" height="20" viewBox="0 0 360 20" fill="none" stroke="#222" aria-hidden="true">
            <path d="M5.500 9v4" stroke="#777" /><path d="M231.500 15v2M249 15.500q0 2-2 2M348.500 15q0 2.500-4.500 2" />
          </svg>
        </div>
      </div>
      {/* status bar */}
      <div className="relative flex h-6 overflow-hidden border-t border-[#a0a0a0]">
        <div className="flex-1 pl-[2px] leading-[26px]">For Help, press F1</div>
        <StatusCell className="w-[118px]">Default</StatusCell>
        <StatusCell className="w-[102px]" />
        <StatusCell className="w-[71px]" />
        <StatusCell className="w-[71px]" />
        <StatusCell className="w-[68px]" />
        <StatusCell className="w-[70px]" />
        <StatusCell className="w-[68px]" />
        <StatusCell className="flex w-[128px] items-center gap-1">
          <svg className="-ml-1" width="24" height="14" viewBox="0 0 24 14" aria-hidden="true">
            {Array.from({ length: 8 }, (_, i) => (
              <g key={i}><rect x={i * 3} y="0" width="2" height={9 - i} fill="#6b7d1c" /><rect x={i * 3} y={10.5 - i} width="2" height={3.5 + i} fill="#123a52" /></g>
            ))}
          </svg>
          614/19 kb
        </StatusCell>
        <div className="absolute top-[11px] left-[492px] flex h-6 w-[379px] border border-[#a0a0a0] bg-white px-3 pt-[6px]">
          <svg width="356" height="12" viewBox="0 0 356 12" fill="none" aria-hidden="true">
            <path d="M0 8c0-5 1-7 4-7s4 2 4 7z" fill="#d2a426" /><path d="M20 5v3M25 4.500h3" stroke="#aaa" /><path d="M295 3q3-3 6 0M337 3l4 4M348 3l-4 4" stroke="#888" />
          </svg>
        </div>
      </div>

      {/* desktop task bar */}
      <footer className="flex h-10 bg-[linear-gradient(90deg,#202224_0%,#202121_28%,#2e2d2c_31%,#444342_36%,#484847_50%,#454545_62%,#2f3030_66%,#1b2023_70%,#1a2024_82%,#231d1d_87%,#1c1c1e_100%)] text-white">
        <Task label="Start"><FaWindows size={17} /></Task>
        <Task label="Search"><svg width="18" height="18" viewBox="0 0 18 18" fill="none" stroke="#fff" strokeWidth="1.400"><circle cx="11" cy="6.500" r="5" /><path d="M7.500 10L1.500 16.500" /></svg></Task>
        <Task label="Cortana"><svg width="18" height="18" viewBox="0 0 18 18" fill="none" stroke="#fff" strokeWidth="2.200"><circle cx="9" cy="9" r="7" /></svg></Task>
        <Task label="Store" className="w-[53px] border-transparent">
          <svg width="24" height="24" viewBox="0 0 24 24"><path d="M1 7h22v15a1.500 1.500 0 01-1.500 1.500h-19A1.500 1.500 0 011 22z" fill="#fff" /><path d="M8 9V4.500q0-3.500 4-3.500t4 3.500V9" fill="none" stroke="#ddd" strokeWidth="1.300" /><path d="M7 10h4.500v4.500H7z" fill="#f25022" /><path d="M12.500 10H17v4.500h-4.500z" fill="#7fba00" /><path d="M7 15.500h4.500V20H7z" fill="#00a4ef" /><path d="M12.500 15.500H17V20h-4.500z" fill="#ffb900" /></svg>
        </Task>
        <span className="w-[3px]" />
        <Task label="Firefox" className="w-10 border-[#9fdcf2]">
          <svg width="24" height="24" viewBox="0 0 24 24">
            <defs><linearGradient id="ff" x1="0.8" y1="0" x2="0.2" y2="1"><stop offset="0" stopColor="#fff04a" /><stop offset=".45" stopColor="#ff8a1e" /><stop offset="1" stopColor="#f5156c" /></linearGradient></defs>
            <circle cx="12" cy="13" r="10" fill="url(#ff)" /><circle cx="12" cy="13" r="6" fill="#7a3fe0" /><FaFirefoxBrowser size={24} style={{ fill: "url(#ff)" }} />
          </svg>
        </Task>
        <span className="w-[5px]" />
        <Task label="Edge"><FaEdgeLegacy size={21} color="#0f7bd7" /></Task>
        <span className="w-[5px]" />
        <Task label="Telegram" className="w-10 border-[#9fdcf2]">
          <span className="rounded-full bg-white"><FaTelegram size={22} color="#2ca1d9" /></span>
        </Task>
        <span className="w-[5px]" />
        <Task label="Trading terminal" className="w-12 border-[#9fdcf2] bg-[#4b4f51]">
          <svg width="24" height="24" viewBox="0 0 24 24" fill="none" stroke="#c0212c" strokeLinejoin="round"><path d="M12 4L3 20.500h18z" strokeWidth="4.500" /><path d="M12 10.500l-3.500 6.500h6" strokeWidth="2.500" /><path d="M12.500 8l-6 10.500h7" stroke="#7d161f" strokeWidth="1" /></svg>
        </Task>
        <span className="w-[5px]" />
        <Task label="Explorer" className="w-10 border-[#9fdcf2]">
          <svg width="22" height="20" viewBox="0 0 22 20"><path d="M0 1h9l1.500 2H22v16H0z" fill="#fcd462" /><path d="M0 1h9v3H0z" fill="#e8a317" /><path d="M4 19v-8h14v8h-3.500v-4h-7v4z" fill="#3f93d3" /></svg>
        </Task>
        <span className="flex-1" />
        <button aria-label="People" className="w-[18px]">
          <svg width="16" height="16" viewBox="0 0 16 16" fill="none" stroke="#fff" strokeWidth="1.200"><circle cx="11" cy="3.500" r="2.700" /><path d="M8 9.500c1-3.500 6-3.500 6.500 1M9 7.500l-1 2" /><circle cx="4.500" cy="9" r="2.200" /><path d="M1 15.500c.5-5 7-5 7 0" /></svg>
        </button>
        <button aria-label="Hidden icons" className="ml-[18px]"><svg width="12" height="7" viewBox="0 0 12 7" fill="none" stroke="#fff" strokeWidth="1.300"><path d="M.5 6.500L6 1l5.500 5.500" /></svg></button>
        <div className="ml-3 flex w-[60px] flex-col items-center justify-center text-[11px] leading-[18px]">
          <span>12:15</span>
          <span>14/06/2020</span>
        </div>
        <button aria-label="Notifications" className="ml-4 border-r border-[#555] pr-[20px]">
          <svg width="17" height="17" viewBox="0 0 17 17"><path d="M.5 1h16v12h-6L8.500 15.500 6.500 13h-6z" fill="#fff" /><path d="M3.500 5h10M3.500 8.500h6" stroke="#1c1c1e" strokeWidth="1.500" /></svg>
        </button>
        <span className="w-1" />
      </footer>
    </div>
  );
}
